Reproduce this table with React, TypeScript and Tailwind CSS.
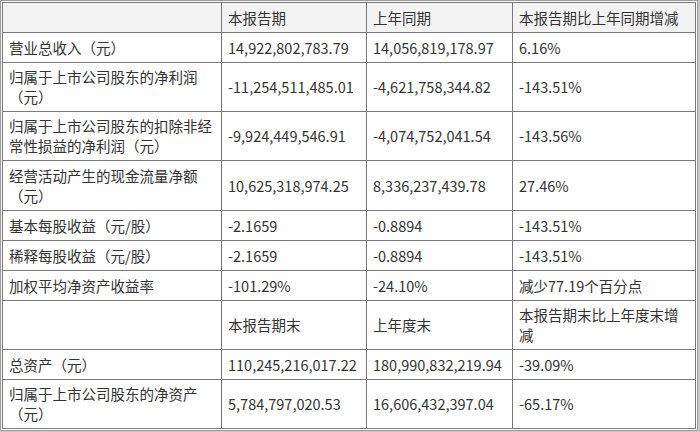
type Line = { cells: [string, string, string, string]; h: string; header?: boolean }

const LINES: Line[] = [
  { cells: ['', '本报告期', '上年同期', '本报告期比上年同期增减'], h: 'h-[30px]', header: true },
  { cells: ['营业总收入（元）', '14,922,802,783.79', '14,056,819,178.97', '6.16%'], h: 'h-[30px]' },
  { cells: ['归属于上市公司股东的净利润（元）', '-11,254,511,485.01', '-4,621,758,344.82', '-143.51%'], h: 'h-[49px]' },
  { cells: ['归属于上市公司股东的扣除非经常性损益的净利润（元）', '-9,924,449,546.91', '-4,074,752,041.54', '-143.56%'], h: 'h-[49px]' },
  { cells: ['经营活动产生的现金流量净额（元）', '10,625,318,974.25', '8,336,237,439.78', '27.46%'], h: 'h-[50px]' },
  { cells: ['基本每股收益（元/股）', '-2.1659', '-0.8894', '-143.51%'], h: 'h-[30px]' },
  { cells: ['稀释每股收益（元/股）', '-2.1659', '-0.8894', '-143.51%'], h: 'h-[30px]' },
  { cells: ['加权平均净资产收益率', '-101.29%', '-24.10%', '减少77.19个百分点'], h: 'h-[30px]' },
  { cells: ['', '本报告期末', '上年度末', '本报告期末比上年度末增减'], h: 'h-[49px]' },
  { cells: ['总资产（元）', '110,245,216,017.22', '180,990,832,219.94', '-39.09%'], h: 'h-[30px]' },
  { cells: ['归属于上市公司股东的净资产（元）', '5,784,797,020.53', '16,606,432,397.04', '-65.17%'], h: 'h-[49px]' },
]

export default function App() {
  return (
    <div className="h-[432px] w-[700px] bg-[#c9c9c9]">
      <div className="w-[698px] border border-[#9a9a9a] bg-white p-px">
        <table
          className="w-full table-fixed border-collapse text-[14.5px] leading-[20px] text-[#333]"
          style={{ fontFamily: '"Noto Sans CJK SC", "Noto Sans", sans-serif' }}
        >
          <colgroup>
            <col className="w-[219px]" />
            <col className="w-[145px]" />
            <col className="w-[146px]" />
            <col />
          </colgroup>
          <tbody>
            {LINES.map((l, ri) => (
              <tr key={ri} className={l.header ? 'bg-[#f3f3f3]' : 'bg-[#fefefe]'}>
                {l.cells.map((t, i) => (
                  <td key={i} className={'border border-[#7a7a7a] px-[6px] py-0 align-middle ' + l.h}>
                    {t}
                  </td>
                ))}
              </tr>
            ))}
          </tbody>
        </table>
      </div>
    </div>
  )
}
